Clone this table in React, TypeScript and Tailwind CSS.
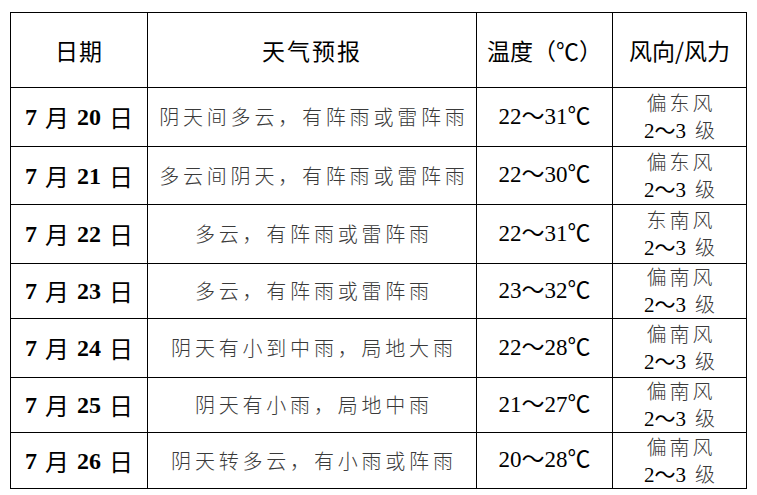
import React from "react";

const rows = [
  { d: "20", w: "阴天间多云，有阵雨或雷阵雨", t: "22～31℃", f: "偏东风", h: "h-[59px]" },
  { d: "21", w: "多云间阴天，有阵雨或雷阵雨", t: "22～30℃", f: "偏东风", h: "h-[58px]" },
  { d: "22", w: "多云，有阵雨或雷阵雨", t: "22～31℃", f: "东南风", h: "h-[59px]" },
  { d: "23", w: "多云，有阵雨或雷阵雨", t: "23～32℃", f: "偏南风", h: "h-[55px]" },
  { d: "24", w: "阴天有小到中雨，局地大雨", t: "22～28℃", f: "偏南风", h: "h-[59px]" },
  { d: "25", w: "阴天有小雨，局地中雨", t: "21～27℃", f: "偏南风", h: "h-[55px]" },
  { d: "26", w: "阴天转多云，有小雨或阵雨", t: "20～28℃", f: "偏南风", h: "h-[56px]" },
];

const serif = "font-['Liberation_Serif','Noto_Sans_CJK_SC',serif]";
const cjk = "font-['Noto_Sans_CJK_SC',sans-serif]";

export default function App() {
  return (
    <div className="w-[757px] h-[495px] bg-white pl-[10px] pt-[12px] text-black">
      <div className="w-[737px] border-l border-t border-black grid grid-cols-[137px_329px_136px_134px]">
        {/* header */}
        <div className={`h-[75px] border-r border-b border-black flex items-center justify-center text-[23px] tracking-[1px] ${cjk}`}>
          日期
        </div>
        <div className={`h-[75px] border-r border-b border-black flex items-center justify-center text-[23px] tracking-[2px] ${cjk}`}>
          天气预报
        </div>
        <div className={`h-[75px] border-r border-b border-black flex items-center justify-center text-[23px] ${cjk}`}>
          温度（℃）
        </div>
        <div className={`h-[75px] border-r border-b border-black flex items-center justify-center text-[23px] ${cjk}`}>
          风向/风力
        </div>
        {rows.map((r) => (
          <React.Fragment key={r.d}>
            <div className={`${r.h} border-r border-b border-black flex items-center justify-center text-[24px] ${serif}`}>
              <span className="font-bold">7</span>
              <span className={`ml-[8px] ${cjk}`}>月</span>
              <span className="ml-[8px] font-bold">{r.d}</span>
              <span className={`ml-[8px] ${cjk}`}>日</span>
            </div>
            <div className={`${r.h} border-r border-b border-black flex items-center justify-center`}>
              <span className={`text-[20px] tracking-[3.8px] pl-[3.8px] text-[#3a3a3a] font-light ${cjk}`}>{r.w}</span>
            </div>
            <div className={`${r.h} border-r border-b border-black flex items-center justify-center text-[23px] ${serif}`}>
              {r.t}
            </div>
            <div className={`${r.h} border-r border-b border-black flex flex-col items-center justify-center text-[20px] leading-[27px] text-[#3a3a3a] ${cjk}`}>
              <span className="font-light tracking-[3px] pl-[3px]">{r.f}</span>
              <span className={`text-black text-[21px] ${serif}`}>
                2～3<span className={`ml-[9px] text-[20px] font-light text-[#3a3a3a] ${cjk}`}>级</span>
              </span>
            </div>
          </React.Fragment>
        ))}
      </div>
    </div>
  );
}
